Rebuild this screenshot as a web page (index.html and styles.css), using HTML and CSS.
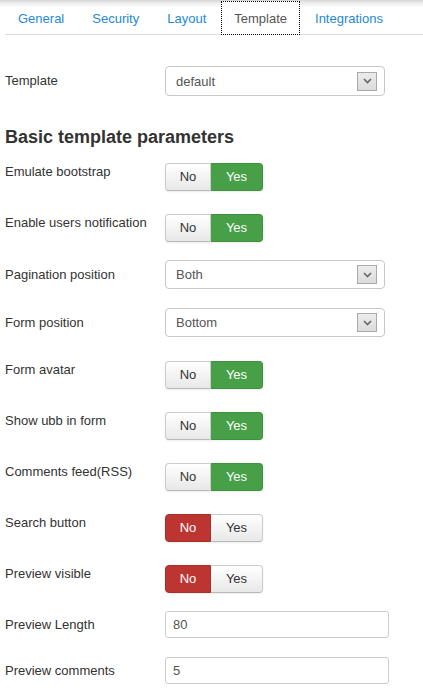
FILE: index.html
```html
<!DOCTYPE html>
<html>
<head>
<meta charset="utf-8">
<link rel="stylesheet" href="styles.css">
</head>
<body>
<div class="page">
  <ul class="tabs">
    <li class="tab"><span>General</span></li>
    <li class="tab"><span>Security</span></li>
    <li class="tab"><span>Layout</span></li>
    <li class="tab active"><span>Template</span></li>
    <li class="tab"><span>Integrations</span></li>
  </ul>

  <div class="row row-center row-template">
    <label class="label">Template</label>
    <div class="select select-tall"><span>default</span><span class="arrow"><svg width="9" height="6" viewBox="0 0 9 6"><polyline points="1,1 4.5,4.5 8,1" fill="none" stroke="#666" stroke-width="1.6"/></svg></span></div>
  </div>

  <h3 class="heading">Basic template parameters</h3>

  <div class="row row-toggle first">
    <label class="label">Emulate bootstrap</label>
    <div class="toggle"><span class="btn">No</span><span class="btn yes-on">Yes</span></div>
  </div>
  <div class="row row-toggle">
    <label class="label">Enable users notification</label>
    <div class="toggle"><span class="btn">No</span><span class="btn yes-on">Yes</span></div>
  </div>
  <div class="row row-center row-after-toggle">
    <label class="label">Pagination position</label>
    <div class="select"><span>Both</span><span class="arrow"><svg width="9" height="6" viewBox="0 0 9 6"><polyline points="1,1 4.5,4.5 8,1" fill="none" stroke="#666" stroke-width="1.6"/></svg></span></div>
  </div>
  <div class="row row-center">
    <label class="label">Form position</label>
    <div class="select"><span>Bottom</span><span class="arrow"><svg width="9" height="6" viewBox="0 0 9 6"><polyline points="1,1 4.5,4.5 8,1" fill="none" stroke="#666" stroke-width="1.6"/></svg></span></div>
  </div>
  <div class="row row-toggle after-field">
    <label class="label">Form avatar</label>
    <div class="toggle"><span class="btn">No</span><span class="btn yes-on">Yes</span></div>
  </div>
  <div class="row row-toggle">
    <label class="label">Show ubb in form</label>
    <div class="toggle"><span class="btn">No</span><span class="btn yes-on">Yes</span></div>
  </div>
  <div class="row row-toggle">
    <label class="label">Comments feed(RSS)</label>
    <div class="toggle"><span class="btn">No</span><span class="btn yes-on">Yes</span></div>
  </div>
  <div class="row row-toggle">
    <label class="label">Search button</label>
    <div class="toggle"><span class="btn no-on">No</span><span class="btn">Yes</span></div>
  </div>
  <div class="row row-toggle">
    <label class="label">Preview visible</label>
    <div class="toggle"><span class="btn no-on">No</span><span class="btn">Yes</span></div>
  </div>
  <div class="row row-center row-after-toggle">
    <label class="label">Preview Length</label>
    <div class="input">80</div>
  </div>
  <div class="row row-center">
    <label class="label">Preview comments</label>
    <div class="input">5</div>
  </div>
</div>
</body>
</html>
```

FILE: styles.css
```css
html, body {
  margin: 0;
  padding: 0;
}
body {
  background: #fff linear-gradient(#d6d6d6 0, #ececec 3px, #fff 7px) no-repeat;
  background-size: 100% 8px;
  font-family: "Liberation Sans", Arial, sans-serif;
  font-size: 13px;
  color: #333;
}
.page {
  padding-left: 5px;
}
.tabs {
  list-style: none;
  margin: 1px 0 0;
  padding: 0;
  display: flex;
  height: 33px;
  border-bottom: 1px solid #ddd;
}
.tab {
  height: 32px;
  line-height: 34px;
  padding: 0 12px;
  margin-right: 2px;
  border: 1px solid transparent;
  color: #2589d5;
  margin-bottom: -1px;
}
.tab.active {
  border: 1px dotted #000;
  background: #fff;
  color: #555;
}
.row {
  display: flex;
  margin-top: 19px;
}
.row-center {
  align-items: center;
}
.row-toggle {
  align-items: flex-start;
  margin-top: 23px;
}
.row-toggle.first {
  margin-top: 16px;
}
.row-toggle.after-field {
  margin-top: 24px;
}
.row-template {
  margin-top: 31px;
}
.row-after-toggle {
  margin-top: 18px;
}
.label {
  width: 160px;
  line-height: 18px;
  flex: none;
}
.heading {
  margin: 31px 0 0;
  font-size: 18px;
  line-height: 20px;
  font-weight: bold;
  color: #333;
}
.select {
  box-sizing: border-box;
  width: 220px;
  height: 29px;
  border: 1px solid #c8c8c8;
  border-radius: 4px;
  display: flex;
  align-items: center;
  justify-content: space-between;
  padding: 0 7px 0 10px;
  color: #555;
  background: #fff;
}
.select-tall {
  height: 30px;
}
.arrow {
  box-sizing: border-box;
  width: 20px;
  height: 19px;
  border: 1px solid #a9a9a9;
  background: linear-gradient(#ececec, #dcdcdc);
  display: flex;
  align-items: center;
  justify-content: center;
}
.toggle {
  display: flex;
  height: 28px;
  border-radius: 4px;
  box-shadow: 0 1px 2px rgba(0,0,0,0.08);
}
.btn {
  box-sizing: border-box;
  height: 28px;
  line-height: 26px;
  border: 1px solid #cccccc;
  border-bottom-color: #b8b8b8;
  background: linear-gradient(#ffffff, #e8e8e8);
  color: #333;
  font-size: 13px;
  text-align: center;
}
.btn:first-child {
  border-radius: 4px 0 0 4px;
  width: 46px;
}
.btn:last-child {
  border-left: none;
  border-radius: 0 4px 4px 0;
  width: 52px;
}
.btn.yes-on {
  background: #47a047;
  border-color: #3e923e;
  color: #fff;
}
.btn.no-on {
  background: #bd3530;
  border-color: #a82e2a;
  color: #fff;
}
.input {
  box-sizing: border-box;
  width: 224px;
  height: 27px;
  line-height: 25px;
  border: 1px solid #ccc;
  border-radius: 3px;
  padding-left: 7px;
  color: #555;
  background: #fff;
}
```
